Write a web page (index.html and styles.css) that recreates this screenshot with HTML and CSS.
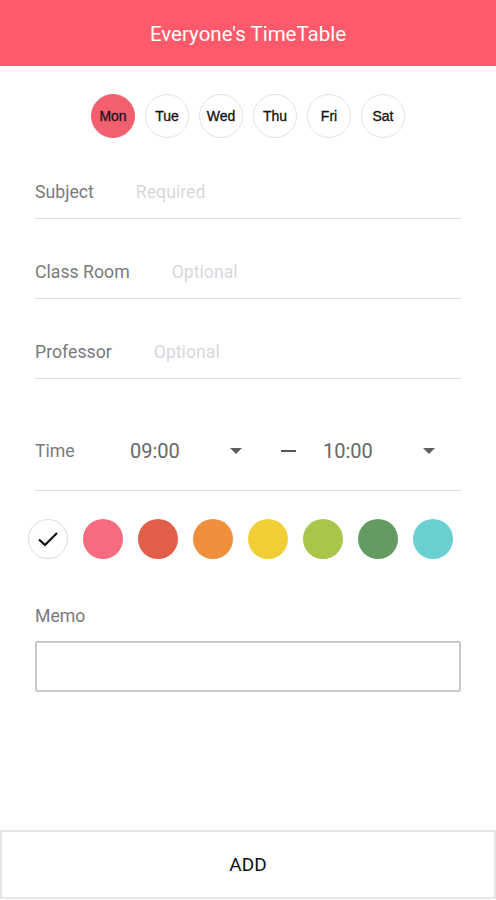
FILE: index.html
```html
<!DOCTYPE html>
<html lang="en">
<head>
<meta charset="utf-8">
<title>Everyone's TimeTable</title>
<link rel="stylesheet" href="styles.css">
</head>
<body>
<div class="app">
  <header class="topbar">Everyone's TimeTable</header>
  <main class="content">
    <div class="days">
      <span class="day active">Mon</span>
      <span class="day">Tue</span>
      <span class="day">Wed</span>
      <span class="day">Thu</span>
      <span class="day">Fri</span>
      <span class="day">Sat</span>
    </div>
    <div class="field">
      <span class="label">Subject</span>
      <span class="placeholder">Required</span>
    </div>
    <div class="field">
      <span class="label">Class Room</span>
      <span class="placeholder">Optional</span>
    </div>
    <div class="field">
      <span class="label">Professor</span>
      <span class="placeholder">Optional</span>
    </div>
    <div class="time-row">
      <span class="label time-label">Time</span>
      <span class="select">
        <span class="time-val">09:00</span>
        <span class="caret"></span>
      </span>
      <span class="dash"></span>
      <span class="select">
        <span class="time-val">10:00</span>
        <span class="caret"></span>
      </span>
    </div>
    <div class="colors">
      <span class="swatch none">
        <svg width="22" height="16" viewBox="0 0 22 16"><path d="M2 8.5 L8 14 L20 2" fill="none" stroke="#111" stroke-width="2.2"/></svg>
      </span>
      <span class="swatch c-pink"></span>
      <span class="swatch c-red"></span>
      <span class="swatch c-orange"></span>
      <span class="swatch c-yellow"></span>
      <span class="swatch c-lime"></span>
      <span class="swatch c-green"></span>
      <span class="swatch c-cyan"></span>
    </div>
    <div class="memo">
      <span class="label">Memo</span>
      <div class="memo-box"></div>
    </div>
  </main>
  <button class="add-btn">ADD</button>
</div>
</body>
</html>
```
FILE: styles.css
```css
* { box-sizing: border-box; }
html, body { margin: 0; padding: 0; background: #fff; }
body { font-family: Roboto, "Liberation Sans", Arial, sans-serif; }
.app {
  display: flex;
  flex-direction: column;
  height: 900px;
}
.topbar {
  height: 66px;
  background: #ff5a6b;
  color: #fff;
  font-size: 20.5px;
  display: flex;
  align-items: center;
  justify-content: center;
  padding-top: 2px;
}
.content {
  flex: 1;
  display: flex;
  flex-direction: column;
}
.days {
  display: flex;
  justify-content: center;
  gap: 10px;
  margin-top: 28px;
  margin-bottom: 1px;
}
.day {
  width: 44px;
  height: 44px;
  border-radius: 50%;
  border: 1px solid #e2e2e2;
  display: flex;
  align-items: center;
  justify-content: center;
  font-family: "Liberation Sans", Arial, sans-serif;
  font-size: 14px;
  color: #111;
  -webkit-text-stroke: 0.3px #111;
}
.day.active {
  background: #f2606f;
  border-color: #f2606f;
  color: #2a0d10;
  -webkit-text-stroke: 0.3px #2a0d10;
}
.field {
  height: 80px;
  margin: 0 35px;
  border-bottom: 1px solid #e0e0e0;
  display: flex;
  align-items: flex-end;
  padding-bottom: 15px;
  gap: 42px;
}
.label {
  font-size: 17.7px;
  line-height: 22px;
  color: #7a7a7a;
}
.placeholder {
  font-size: 17.7px;
  line-height: 22px;
  color: #d8d8d8;
}
.time-row {
  height: 112px;
  margin: 0 35px;
  border-bottom: 1px solid #e0e0e0;
  display: flex;
  align-items: center;
  padding-top: 32px;
}
.time-label { width: 95px; }
.select {
  width: 120px;
  display: flex;
  align-items: center;
  justify-content: space-between;
  padding-right: 8px;
}
.time-val {
  font-size: 20px;
  line-height: 24px;
  color: #666;
}
.caret {
  width: 0;
  height: 0;
  border-left: 6px solid transparent;
  border-right: 6px solid transparent;
  border-top: 6px solid #5f5f5f;
  margin-top: 1px;
}
.dash {
  width: 15px;
  height: 2px;
  background: #555;
  margin-left: 31px;
  margin-right: 27px;
}
.colors {
  display: flex;
  gap: 15px;
  padding-left: 28px;
  margin-top: 28px;
}
.swatch {
  width: 40px;
  height: 40px;
  border-radius: 50%;
  display: flex;
  align-items: center;
  justify-content: center;
}
.swatch.none { border: 1px solid #dedede; background: #fff; }
.c-pink { background: #f76b80; }
.c-red { background: #e35e4a; }
.c-orange { background: #ef8f3c; }
.c-yellow { background: #f2ce36; }
.c-lime { background: #a9c54a; }
.c-green { background: #639b63; }
.c-cyan { background: #6bd0d1; }
.memo {
  margin: 46px 35px 0;
  display: flex;
  flex-direction: column;
  gap: 14px;
}
.memo-box {
  height: 51px;
  border: 2px solid #c9c9c9;
  border-radius: 2px;
}
.add-btn {
  height: 69px;
  margin-bottom: 1px;
  border: 2px solid #e6e6e6;
  background: #fff;
  font-family: Roboto, "Liberation Sans", Arial, sans-serif;
  font-size: 19px;
  color: #111;
  padding: 0;
}
```
